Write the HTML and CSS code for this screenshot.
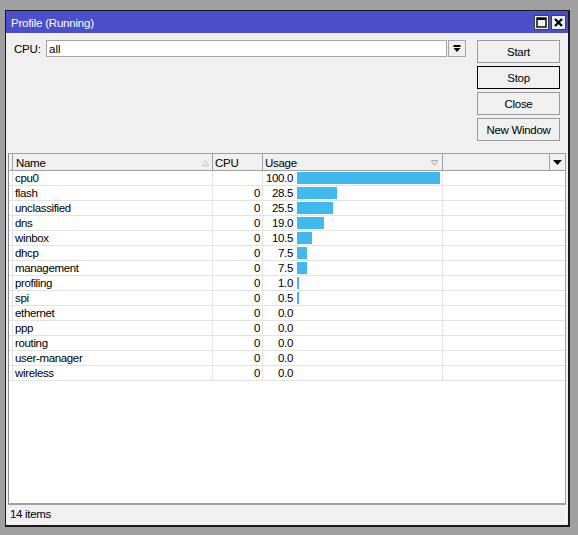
FILE: index.html
```html
<!DOCTYPE html>
<html>
<head>
<meta charset="utf-8">
<link rel="stylesheet" href="styles.css">
</head>
<body>
<div class="window">
  <div class="titlebar">
    <span class="title">Profile (Running)</span>
    <div class="tbtns">
      <span class="tbtn"><svg width="13" height="13" viewBox="0 0 13 13"><rect x="2" y="2" width="9" height="9" fill="none" stroke="#000" stroke-width="1.4"/><rect x="2" y="2" width="9" height="2" fill="#000"/></svg></span>
      <span class="tbtn"><svg width="13" height="13" viewBox="0 0 13 13"><path d="M3 3 L10 10 M10 3 L3 10" stroke="#000" stroke-width="2.2"/></svg></span>
    </div>
  </div>
  <div class="content">
    <div class="top">
      <div class="cpu-row">
        <span class="cpu-label">CPU:</span>
        <div class="input">all</div>
        <div class="dd"><svg width="8" height="8" viewBox="0 0 8 8"><rect x="0.5" y="0" width="7" height="2" fill="#000"/><polygon points="0.5,3 7.5,3 4,7" fill="#000"/></svg></div>
      </div>
      <div class="buttons">
        <div class="btn">Start</div>
        <div class="btn focus">Stop</div>
        <div class="btn">Close</div>
        <div class="btn">New Window</div>
      </div>
    </div>
    <div class="list">
      <div class="hrow">
        <div class="hc"></div>
        <div class="hc hname">Name<svg class="sort" width="7" height="6" viewBox="0 0 7 6"><polygon points="3.5,0.5 6.5,5.5 0.5,5.5" fill="none" stroke="#c8c8c8" stroke-width="1"/></svg></div>
        <div class="hc">CPU</div>
        <div class="hc husage">Usage<svg class="sort" width="7" height="6" viewBox="0 0 7 6"><polygon points="0.5,0.5 6.5,0.5 3.5,5.5" fill="none" stroke="#a8a8a8" stroke-width="1"/></svg></div>
        <div class="hc"></div>
        <div class="hc harrow"><svg width="9" height="5" viewBox="0 0 9 5"><polygon points="0,0 9,0 4.5,5" fill="#000"/></svg></div>
      </div>
      <div class="rows">
        <div class="row"><div class="c"></div><div class="c name">cpu0</div><div class="c cpu"></div><div class="c usage"><span class="val">100.0</span><span class="bar" style="width:143px"></span></div><div class="c last"></div></div>
        <div class="row"><div class="c"></div><div class="c name">flash</div><div class="c cpu">0</div><div class="c usage"><span class="val">28.5</span><span class="bar" style="width:40px"></span></div><div class="c last"></div></div>
        <div class="row"><div class="c"></div><div class="c name">unclassified</div><div class="c cpu">0</div><div class="c usage"><span class="val">25.5</span><span class="bar" style="width:36px"></span></div><div class="c last"></div></div>
        <div class="row"><div class="c"></div><div class="c name">dns</div><div class="c cpu">0</div><div class="c usage"><span class="val">19.0</span><span class="bar" style="width:27px"></span></div><div class="c last"></div></div>
        <div class="row"><div class="c"></div><div class="c name">winbox</div><div class="c cpu">0</div><div class="c usage"><span class="val">10.5</span><span class="bar" style="width:15px"></span></div><div class="c last"></div></div>
        <div class="row"><div class="c"></div><div class="c name">dhcp</div><div class="c cpu">0</div><div class="c usage"><span class="val">7.5</span><span class="bar" style="width:10px"></span></div><div class="c last"></div></div>
        <div class="row"><div class="c"></div><div class="c name">management</div><div class="c cpu">0</div><div class="c usage"><span class="val">7.5</span><span class="bar" style="width:10px"></span></div><div class="c last"></div></div>
        <div class="row"><div class="c"></div><div class="c name">profiling</div><div class="c cpu">0</div><div class="c usage"><span class="val">1.0</span><span class="bar" style="width:2px"></span></div><div class="c last"></div></div>
        <div class="row"><div class="c"></div><div class="c name">spi</div><div class="c cpu">0</div><div class="c usage"><span class="val">0.5</span><span class="bar" style="width:2px"></span></div><div class="c last"></div></div>
        <div class="row"><div class="c"></div><div class="c name">ethernet</div><div class="c cpu">0</div><div class="c usage"><span class="val">0.0</span></div><div class="c last"></div></div>
        <div class="row"><div class="c"></div><div class="c name">ppp</div><div class="c cpu">0</div><div class="c usage"><span class="val">0.0</span></div><div class="c last"></div></div>
        <div class="row"><div class="c"></div><div class="c name">routing</div><div class="c cpu">0</div><div class="c usage"><span class="val">0.0</span></div><div class="c last"></div></div>
        <div class="row"><div class="c"></div><div class="c name">user-manager</div><div class="c cpu">0</div><div class="c usage"><span class="val">0.0</span></div><div class="c last"></div></div>
        <div class="row"><div class="c"></div><div class="c name">wireless</div><div class="c cpu">0</div><div class="c usage"><span class="val">0.0</span></div><div class="c last"></div></div>
      </div>
    </div>
    <div class="status">14 items</div>
  </div>
</div>
</body>
</html>
```

FILE: styles.css
```css
* { box-sizing: border-box; }
html, body {
  margin: 0;
  padding: 0;
}
body {
  width: 578px;
  height: 535px;
  background: #a0a0a0;
  font-family: "Liberation Sans", Arial, sans-serif;
  font-size: 11px;
  color: #000;
  overflow: hidden;
}
.window {
  margin: 10px 0 0 5px;
  width: 565px;
  height: 517px;
  border-left: 1px solid #1a1a1a;
  border-top: 1px solid #1a1a1a;
  border-right: 2px solid #1a1a1a;
  border-bottom: 2px solid #1a1a1a;
  background: #f0f0f0;
  display: flex;
  flex-direction: column;
}
.titlebar {
  height: 22px;
  background: #4b4fcc;
  display: flex;
  align-items: center;
  justify-content: space-between;
  padding-left: 5px;
}
.title {
  color: #fff;
  font-size: 11.5px;
  letter-spacing: -0.2px;
  padding-top: 2px;
}
.tbtns {
  display: flex;
  gap: 2px;
  margin-right: 2px;
}
.tbtn {
  width: 15px;
  height: 15px;
  border: 1px solid #404040;
  background: #f0f0f0;
  display: flex;
  align-items: center;
  justify-content: center;
}
.content {
  flex: 1;
  display: flex;
  flex-direction: column;
}
.top {
  height: 120px;
  display: flex;
  padding: 7px 0 0 8px;
}
.cpu-row {
  display: flex;
  align-items: flex-start;
  height: 17px;
}
.cpu-label {
  width: 32px;
  line-height: 18px;
  font-size: 11.5px;
  letter-spacing: -0.2px;
}
.input {
  width: 401px;
  height: 17px;
  border: 1px solid #a5a5a5;
  background: #fff;
  padding-left: 2px;
  line-height: 16px;
  font-size: 11.5px;
}
.dd {
  width: 18px;
  height: 17px;
  margin-left: 1px;
  border: 1px solid #a5a5a5;
  background: #f0f0f0;
  display: flex;
  align-items: center;
  justify-content: center;
}
.buttons {
  margin-left: 11px;
  display: flex;
  flex-direction: column;
  gap: 3px;
}
.btn {
  width: 83px;
  height: 23px;
  border: 1px solid #9a9a9a;
  background: #f0f0f0;
  display: flex;
  align-items: center;
  justify-content: center;
  padding-top: 1px;
  font-size: 11.5px;
  letter-spacing: -0.3px;
}
.btn.focus {
  border-color: #000;
}
.list {
  height: 352px;
  margin: 0 2px;
  background: #fff;
  border-left: 1px solid #8c8c8c;
  border-top: 1px solid #a0a0a0;
  border-right: 1px solid #a0a0a0;
  border-bottom: 2px solid #a0a0a0;
  display: flex;
  flex-direction: column;
}
.hrow {
  height: 17px;
  display: grid;
  grid-template-columns: 4px 200px 50px 180px 107px 15px;
  background: #f0f0f0;
  border-bottom: 1px solid #a0a0a0;
}
.hc {
  border-right: 1px solid #a0a0a0;
  padding-left: 2px;
  padding-top: 1px;
  line-height: 16px;
  display: flex;
  align-items: center;
  font-size: 11.5px;
  letter-spacing: -0.3px;
}
.hname { padding-left: 3px; }
.hc .sort { margin-left: auto; margin-right: 3px; }
.husage .sort { margin-right: 4px; }
.harrow {
  border-right: none;
  justify-content: center;
  padding-left: 0;
  padding-top: 0;
}
.row {
  height: 15px;
  display: grid;
  grid-template-columns: 4px 200px 50px 180px 1fr;
  border-bottom: 1px solid #e3e3e3;
}
.c {
  border-right: 1px solid #e3e3e3;
  line-height: 15px;
  white-space: nowrap;
  font-size: 11.5px;
  letter-spacing: -0.35px;
}
.c.last { border-right: none; }
.name { padding-left: 2px; }
.cpu { text-align: right; padding-right: 2px; }
.usage {
  display: flex;
  align-items: flex-start;
}
.val {
  width: 30px;
  text-align: right;
  flex: none;
}
.bar {
  display: block;
  flex: none;
  height: 12px;
  margin-top: 1px;
  margin-left: 4px;
  background: #3fb9ee;
}
.status {
  height: 18px;
  margin: 0 2px;
  padding-left: 2px;
  line-height: 19px;
  font-size: 11.5px;
  letter-spacing: -0.3px;
  border-right: 1px solid #fafafa;
  border-bottom: 1px solid #fafafa;
}
```
